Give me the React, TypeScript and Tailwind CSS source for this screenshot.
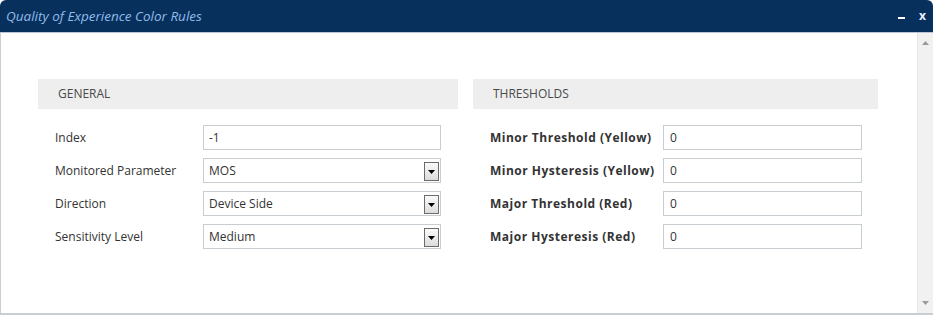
const font = { fontFamily: '"Open Sans", "Noto Sans", sans-serif' };

const general = [
  { label: "Index", value: "-1", select: false },
  { label: "Monitored Parameter", value: "MOS", select: true },
  { label: "Direction", value: "Device Side", select: true },
  { label: "Sensitivity Level", value: "Medium", select: true },
];

const thresholds = [
  { label: "Minor Threshold (Yellow)", value: "0" },
  { label: "Minor Hysteresis (Yellow)", value: "0" },
  { label: "Major Threshold (Red)", value: "0" },
  { label: "Major Hysteresis (Red)", value: "0" },
];

const SelectArrow = () => (
  <div className="absolute right-[1px] top-[3px] flex h-[19px] w-[15px] items-center justify-center border border-[#6b6b6b] bg-gradient-to-b from-[#fafafa] to-[#dcdcdc]">
    <svg width="7" height="4" viewBox="0 0 7 4">
      <path d="M0 0 H7 L3.5 4 Z" fill="#000" />
    </svg>
  </div>
);

const App = () => {
  return (
    <div className="h-[317px] w-[933px] bg-white text-[12px]" style={font}>
      <div className="flex h-[33px] items-center justify-between rounded-t-[6px] border-b border-[#b9c6d6] bg-[#08305c] pl-[6px] pr-[7px]">
        <span className="text-[13.5px] italic text-[#8fbbea]">Quality of Experience Color Rules</span>
        <div className="flex items-center gap-[14px] text-white">
          <span className="mt-[4px] block h-[2px] w-[7px] bg-white" />
          <span className="text-[12px] font-bold leading-none text-[#e8f0ff]">x</span>
        </div>
      </div>
      <div className="flex h-[282px] border-b-2 border-l border-[#c9ced4]">
        <div className="flex flex-1 gap-[15px] pl-[37px] pt-[46px]">
          <div className="w-[420px]">
            <div className="flex h-[30px] items-center bg-[#eeeeee] pl-[20px] text-[#4a4a4a]">GENERAL</div>
            <div className="pt-[16px]">
              {general.map((row) => (
                <div key={row.label} className="flex h-[33px] items-start pl-[17px]">
                  <span className="w-[148px] pt-[4px] text-[#333]">{row.label}</span>
                  <div className="relative h-[25px] w-[238px] border border-[#c8cdd2] pl-[5px] pt-[3px] text-[#333]">
                    {row.value}
                    {row.select && <SelectArrow />}
                  </div>
                </div>
              ))}
            </div>
          </div>
          <div className="w-[405px]">
            <div className="flex h-[30px] items-center bg-[#eeeeee] pl-[20px] text-[#4a4a4a]">THRESHOLDS</div>
            <div className="pt-[16px]">
              {thresholds.map((row) => (
                <div key={row.label} className="flex h-[33px] items-start pl-[17px]">
                  <span className="w-[173px] pt-[4px] font-bold tracking-[0.5px] text-[#333]">{row.label}</span>
                  <div className="h-[25px] w-[199px] border border-[#c8cdd2] pl-[6px] pt-[3px] text-[#333]">{row.value}</div>
                </div>
              ))}
            </div>
          </div>
        </div>
        <div className="flex w-[16px] flex-col items-center justify-between border-l border-[#e6e6e6] bg-[#f1f1f1] py-[8px]">
          <svg width="7" height="4" viewBox="0 0 7 4">
            <path d="M3.5 0 L7 4 H0 Z" fill="#9a9a9a" />
          </svg>
          <svg width="7" height="4" viewBox="0 0 7 4">
            <path d="M0 0 H7 L3.5 4 Z" fill="#9a9a9a" />
          </svg>
        </div>
      </div>
    </div>
  );
};

export default App;
